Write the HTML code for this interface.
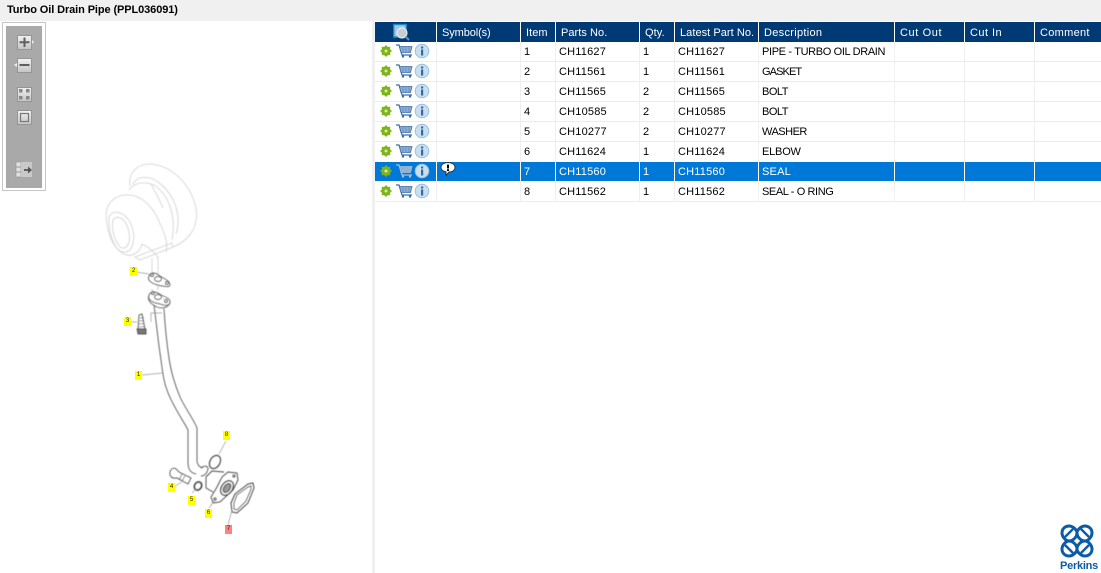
<!DOCTYPE html>
<html><head><meta charset="utf-8">
<style>
html,body{margin:0;padding:0;width:1101px;height:573px;overflow:hidden;background:#f0f0f0;font-family:"Liberation Sans",sans-serif;}
.abs{position:absolute}
#title{left:7px;top:3px;font-size:11px;font-weight:bold;line-height:15px;color:#000;letter-spacing:-.1px;white-space:nowrap}
#left{left:0;top:21px;width:372px;height:552px;background:#fff}
#right{left:375px;top:21px;width:726px;height:552px;background:#fff}
.hd{position:absolute;top:22px;height:20px;background:#003a75;color:#fff;font-size:11px;line-height:22px;letter-spacing:.05px;white-space:nowrap;box-sizing:border-box;padding-left:4px;overflow:hidden}
.w{letter-spacing:.45px}
.row{position:absolute;left:375px;width:726px;height:19px}
.c{position:absolute;top:2px;font-size:11px;line-height:19px;letter-spacing:.2px;white-space:nowrap;color:#000}
.d{letter-spacing:-.35px}
.sel .c{color:#fff}
.hl{position:absolute;left:375px;width:726px;height:1px;background:#ececec}
.vl{position:absolute;top:42px;height:160px;width:1px;background:#efefef}
.sv{position:absolute;top:162px;width:1px;height:19px;background:#fff}
.lab{position:absolute;background:#ffff00;font-size:6px;line-height:9px;height:9px;width:7px;text-align:center;color:#222}
</style></head><body>
<div class="abs" id="title">Turbo Oil Drain Pipe (PPL036091)</div>
<div class="abs" id="left"></div>
<div class="abs" id="right"></div>

<svg class="abs" style="left:0;top:0" width="372" height="573" viewBox="0 0 372 573">
<defs>
<linearGradient id="btn" x1="0" y1="0" x2="0" y2="1"><stop offset="0" stop-color="#f2f2f2"/><stop offset="1" stop-color="#c4c4c4"/></linearGradient>
</defs>
<rect x="2.5" y="22.5" width="43" height="168" fill="#fff" stroke="#c6c6c6"/>
<rect x="6" y="26" width="36" height="162" fill="#a9a9a9"/>
<g stroke="#959595" fill="url(#btn)">
<rect x="17.5" y="35.5" width="14" height="14"/><rect x="17.5" y="58.5" width="14" height="14"/>
<rect x="17.5" y="87.5" width="14" height="14"/><rect x="17.5" y="110.5" width="14" height="14"/>
</g>
<path d="M32 40l2 2-2 2zM17 63l-3 2 3 2z" fill="#eee"/>
<path d="M19.500 41.200h10v2h-10zM23.500 37.500h2v9.500h-2zM19.500 64h10v2h-10z" fill="#606060"/>
<path d="M19 89h3.500v3.500h-3.500zM26 89h3.500v3.500h-3.500zM19 96h3.500v3.500h-3.500zM26 96h3.500v3.500h-3.500z" fill="#888"/>
<rect x="20.500" y="113.500" width="8" height="8" fill="none" stroke="#777" stroke-width="1.200"/>
<path d="M16 162h5v15h-5z" fill="#e0e0e0" stroke="#999" stroke-width=".7"/>
<path d="M16 167h5M16 172h5" stroke="#999"/>
<rect x="21" y="162" width="11" height="15" fill="#e4e4e4" opacity=".55"/>
<path d="M24 170h5" stroke="#555" stroke-width="1.800"/><path d="M28 166.500l4 3.500-4 3.500z" fill="#555"/>

<g style="filter:blur(.4px)">
<!-- turbo -->
<g fill="none" stroke="#cfcfcf" stroke-width=".8">
<path d="M130 186C128 172 138 164 150 164C170 165 190 182 196 208C199 226 190 240 173 247"/>
<path d="M133 184C138 175 150 176 158 182C174 194 182 214 176 234"/>
<path d="M129 190C136 180 152 181 160 190C170 200 176 218 172 240"/>
<path d="M106 213C108 200 118 194 130 195C145 197 155 210 161 226C166 236 168 246 166 252"/>
<path d="M106 213C106 230 112 248 124 254C132 258 140 252 142 244"/>
<path d="M109 216C116 208 126 214 131 224C136 236 134 250 126 252C116 254 108 236 109 216Z"/>
<path d="M113 220C118 214 125 219 128 228C131 238 129 247 124 248C117 249 111 232 113 220Z"/>
<path d="M135 257L172 243L173 247L140 260Z"/>
<path d="M151 184C156 194 160 200 163 208M142 244C150 248 155 252 158 258"/>
<path d="M152 258V275M158 256V275"/>
</g>
<!-- gasket 2 -->
<g fill="none" stroke="#666" stroke-width=".9">
<path d="M149 276C151 272 155 272 160 276C165 279 170 281 170 285C169 288 165 286 162 286C156 285 146 282 149 276Z"/>
<ellipse cx="158" cy="279" rx="3.500" ry="2.500"/><circle cx="152" cy="275" r="1.500"/><circle cx="167" cy="283" r="1.500"/>
<!-- flange -->
<path d="M149 295C151 291 156 291 161 295C166 297 171 299 170 303C168 307 163 305 160 304C155 303 147 301 149 295Z"/>
<path d="M149 295C147 300 150 303 155 306C160 309 167 309 170 303"/>
<ellipse cx="158" cy="297" rx="3.500" ry="2.500"/><circle cx="153" cy="293" r="1.500"/><circle cx="166" cy="301" r="1.500"/>
</g>
<path d="M152 289V292M158 286V290" stroke="#bbb" stroke-width=".8"/>
<!-- pipe -->
<g fill="none" stroke="#555" stroke-width=".9">
<path d="M154 305C156 320 158 340 160 353C162 366 163 380 167 390C172 405 183 420 188 430V462C188 470 191 473 196 474"/>
<path d="M164 309C165 325 167 345 169 358C171 372 175 385 180 397C185 408 194 420 197 428V460C197 464 199 467 203 468"/>
<path d="M201 468C204 465 208 466 208 469C207 473 205 476 201 476"/>
</g>
<!-- bolt 3 -->
<g fill="none" stroke="#555" stroke-width=".9">
<path d="M139 315L142 314L145 329H138Z"/><path d="M140 318l4-.5M139.500 321l4.500-.5M139 324l5-.5M139 327l6-.5" stroke-width=".6"/>
<path d="M137 329H146V334H138Z" fill="#777"/>
</g>
<!-- oring 8 -->
<ellipse cx="215" cy="462" rx="5" ry="7" transform="rotate(30 215 462)" fill="none" stroke="#555" stroke-width="1.300"/>
<!-- bolt 4 -->
<g fill="none" stroke="#555" stroke-width=".9">
<path d="M170 472C171 468 175 467 177 470L179 472L191 478L188 484L177 478C172 479 169 476 170 472Z"/>
<path d="M182 474L179 480M185 476L182 481" stroke-width=".6"/>
</g>
<!-- washer 5 -->
<ellipse cx="198" cy="486" rx="3.500" ry="4.300" transform="rotate(30 198 486)" fill="none" stroke="#444" stroke-width="1.600"/>
<!-- elbow 6 -->
<g fill="none" stroke="#444" stroke-width=".9">
<path d="M206 477L212 471L224 472"/>
<path d="M206 477V488L213 492"/>
<path d="M228 472L237 473L238 480L233 490L220 502L213 503L211 497L217 487L222 477Z" fill="#fff"/>
<ellipse cx="227" cy="488" rx="5.500" ry="8" transform="rotate(35 227 488)" stroke-width="1.100"/>
<ellipse cx="227" cy="488" rx="3" ry="5" transform="rotate(35 227 488)" fill="#999"/>
<circle cx="234" cy="476" r="1.100"/><circle cx="215" cy="499" r="1.100"/>
<path d="M235 494L248 484L253 483L254 488L248 503L237 513L232 512L231 503Z" stroke-width="1"/>
<path d="M237 495L248 487L251 486L251 489L246 501L237 510L234 509L234 503Z" stroke-width=".7"/>
</g>
<!-- leaders -->
<g stroke="#999" stroke-width=".7" fill="none">
<path d="M136 272L149 274M131 322H137M142 375L163 373M226 441L219 454M174 487L183 481M192 493L196 489M209 508L215 500M228 525L232 510M162 313H151V322"/>
</g>
</g>
</svg>

<div class="lab" style="left:130px;top:267px">2</div>
<div class="lab" style="left:124px;top:317px">3</div>
<div class="lab" style="left:135px;top:371px">1</div>
<div class="lab" style="left:223px;top:431px">8</div>
<div class="lab" style="left:168px;top:483px">4</div>
<div class="lab" style="left:188px;top:496px">5</div>
<div class="lab" style="left:205px;top:509px">6</div>
<div class="lab" style="left:225px;top:525px;background:#ff8080">7</div>

<!-- headers -->
<div class="hd" style="left:375px;width:61px"></div>
<div class="hd" style="left:437px;width:83px;padding-left:5px;letter-spacing:-.1px">Symbol(s)</div>
<div class="hd" style="left:521px;width:34px;padding-left:5px">Item</div>
<div class="hd" style="left:556px;width:83px;padding-left:5px">Parts No.</div>
<div class="hd" style="left:640px;width:34px;padding-left:5px">Qty.</div>
<div class="hd" style="left:675px;width:83px;padding-left:5px">Latest Part No.</div>
<div class="hd w" style="left:759px;width:135px;padding-left:5px;letter-spacing:.3px">Description</div>
<div class="hd w" style="left:895px;width:69px;padding-left:5px;letter-spacing:.6px">Cut Out</div>
<div class="hd w" style="left:965px;width:69px;padding-left:5px">Cut In</div>
<div class="hd w" style="left:1035px;width:66px;padding-left:5px;letter-spacing:.3px">Comment</div>
<svg class="abs" style="left:393px;top:23px" width="18" height="18" viewBox="0 0 18 18">
<rect x=".7" y="1.500" width="12.600" height="12.600" fill="#9fc9e6" stroke="#1f86c4" stroke-width="1.400"/>
<circle cx="9" cy="10" r="5" fill="#c9cdd2" stroke="#eef0f2"/>
<path d="M12.500 13.500l3.500 3.500" stroke="#5b8fc8" stroke-width="2"/>
</svg>

<!-- rows -->
<div class="row sel" style="top:162px;background:#0078d7"></div>
<div class="hl" style="top:61px"></div><div class="hl" style="top:81px"></div><div class="hl" style="top:101px"></div>
<div class="hl" style="top:121px"></div><div class="hl" style="top:141px"></div>
<div class="hl" style="top:201px"></div>
<div class="vl" style="left:436px"></div><div class="vl" style="left:520px"></div><div class="vl" style="left:555px"></div>
<div class="vl" style="left:639px"></div><div class="vl" style="left:674px"></div><div class="vl" style="left:758px"></div>
<div class="vl" style="left:894px"></div><div class="vl" style="left:964px"></div><div class="vl" style="left:1034px"></div>

<div class="row" style="top:41px"><span class="c" style="left:149px">1</span><span class="c" style="left:184px">CH11627</span><span class="c" style="left:268px">1</span><span class="c" style="left:303px">CH11627</span><span class="c d" style="left:387px">PIPE - TURBO OIL DRAIN</span></div>
<div class="row" style="top:61px"><span class="c" style="left:149px">2</span><span class="c" style="left:184px">CH11561</span><span class="c" style="left:268px">1</span><span class="c" style="left:303px">CH11561</span><span class="c d" style="left:387px;letter-spacing:-.9px">GASKET</span></div>
<div class="row" style="top:81px"><span class="c" style="left:149px">3</span><span class="c" style="left:184px">CH11565</span><span class="c" style="left:268px">2</span><span class="c" style="left:303px">CH11565</span><span class="c d" style="left:387px;letter-spacing:-.5px">BOLT</span></div>
<div class="row" style="top:101px"><span class="c" style="left:149px">4</span><span class="c" style="left:184px">CH10585</span><span class="c" style="left:268px">2</span><span class="c" style="left:303px">CH10585</span><span class="c d" style="left:387px;letter-spacing:-.5px">BOLT</span></div>
<div class="row" style="top:121px"><span class="c" style="left:149px">5</span><span class="c" style="left:184px">CH10277</span><span class="c" style="left:268px">2</span><span class="c" style="left:303px">CH10277</span><span class="c d" style="left:387px;letter-spacing:-.5px">WASHER</span></div>
<div class="row" style="top:141px"><span class="c" style="left:149px">6</span><span class="c" style="left:184px">CH11624</span><span class="c" style="left:268px">1</span><span class="c" style="left:303px">CH11624</span><span class="c d" style="left:387px;letter-spacing:-.2px">ELBOW</span></div>
<div class="row sel" style="top:161px"><span class="c" style="left:149px">7</span><span class="c" style="left:184px">CH11560</span><span class="c" style="left:268px">1</span><span class="c" style="left:303px">CH11560</span><span class="c d" style="left:387px;letter-spacing:.2px">SEAL</span></div>
<div class="row" style="top:181px"><span class="c" style="left:149px">8</span><span class="c" style="left:184px">CH11562</span><span class="c" style="left:268px">1</span><span class="c" style="left:303px">CH11562</span><span class="c d" style="left:387px;letter-spacing:-.4px">SEAL - O RING</span></div>
<div class="sv" style="left:436px"></div><div class="sv" style="left:520px"></div><div class="sv" style="left:555px"></div>
<div class="sv" style="left:639px"></div><div class="sv" style="left:674px"></div><div class="sv" style="left:758px"></div>
<div class="sv" style="left:894px"></div><div class="sv" style="left:964px"></div><div class="sv" style="left:1034px"></div>

<!-- row icons -->
<svg class="abs" style="left:375px;top:41px;color:#3f6ea6" width="62" height="160" viewBox="0 0 62 160">
<defs>
<g id="ic">
<circle cx="11" cy="10" r="3.400" fill="none" stroke="#7cb518" stroke-width="2.600"/>
<path d="M11 4.500v11M5.500 10h11M7.100 6.100l7.800 7.800M14.900 6.100l-7.800 7.800" stroke="#7cb518" stroke-width="1.800"/>
<circle cx="11" cy="10" r="1.500" fill="#dbe8b8"/>
<path d="M21 4h3l3 10h10" fill="none" stroke="currentColor" stroke-width="1.300"/>
<path d="M24.500 5.500H37L35.500 11.500H26Z" fill="#8fb0d4" stroke="currentColor" stroke-width=".8"/>
<path d="M28 5.500V11.500M31 5.500V11.500M34 5.500V11.500" stroke="currentColor" stroke-width=".5"/>
<circle cx="28" cy="15.500" r="1.200" fill="currentColor"/><circle cx="35" cy="15.500" r="1.200" fill="currentColor"/>
<circle cx="47" cy="10" r="6.800" fill="#c9dff0" stroke="#9dbfdc"/>
<rect x="46" y="5.500" width="2.200" height="2" fill="#2e6ca6"/><rect x="46" y="8.500" width="2.200" height="6" fill="#2e6ca6"/>
</g>
</defs>
<use href="#ic" y="0"/><use href="#ic" y="20"/><use href="#ic" y="40"/><use href="#ic" y="60"/>
<use href="#ic" y="80"/><use href="#ic" y="100"/><use href="#ic" y="120" style="color:#a8bcd4"/><use href="#ic" y="140"/>
</svg>
<!-- symbol -->
<svg class="abs" style="left:440px;top:162px" width="16" height="15" viewBox="0 0 16 15">
<path d="M8 .5C12 .5 15 2.500 15 5.500C15 8.500 12 10 9 10L6 13.500L6 9.800C3 9.300 1 8 1 5.500C1 2.500 4 .5 8 .5Z" fill="#fff" stroke="#333"/>
<rect x="7" y="2.500" width="2" height="4" fill="#000"/><rect x="7" y="7.200" width="2" height="1.800" fill="#000"/>
</svg>

<!-- logo -->
<svg class="abs" style="left:1058px;top:522px" width="38" height="38" viewBox="0 0 38 38">
<g fill="none" stroke="#0b5ca5" stroke-width="3">
<path d="M4 11C4 6 8 4 11 4C15 4 19 8 19 11C19 15 15 19 11 19C8 19 4 15 4 11Z"/>
<path d="M19 11C19 8 23 4 27 4C30 4 34 6 34 11C34 15 30 19 27 19C23 19 19 15 19 11Z"/>
<path d="M4 27C4 23 8 19 11 19C15 19 19 23 19 27C19 30 15 34 11 34C8 34 4 32 4 27Z"/>
<path d="M19 27C19 23 23 19 27 19C30 19 34 23 34 27C34 32 30 34 27 34C23 34 19 30 19 27Z"/>
<path d="M7 15L15 7M31 15L23 7M7 23L15 31M31 23L23 31" stroke-width="2.400"/>
</g>
</svg>
<div class="abs" style="left:1060px;top:560px;font-size:11px;font-weight:bold;line-height:12px;color:#0b5ca5;letter-spacing:-.25px;white-space:nowrap">Perkins</div>
</body></html>
